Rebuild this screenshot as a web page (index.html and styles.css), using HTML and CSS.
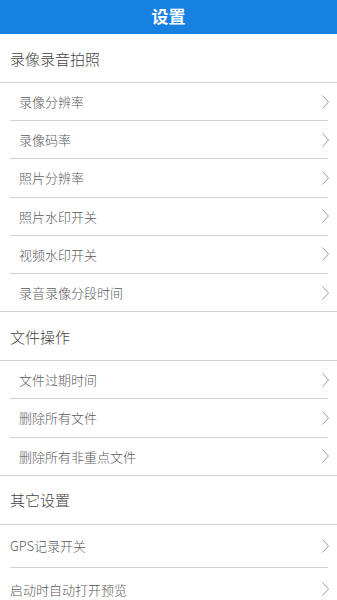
FILE: index.html
```html
<!DOCTYPE html>
<html lang="zh">
<head>
<meta charset="utf-8">
<title>设置</title>
<link rel="stylesheet" href="styles.css">
</head>
<body>
<header class="topbar"><h1 class="title">设置</h1></header>

<div class="section-title">录像录音拍照</div>
<div class="group">
  <div class="row"><span>录像分辨率</span><svg class="chev" viewBox="0 0 7 14"><polyline points="0.5,0.5 6.5,7 0.5,13.5"/></svg></div>
  <div class="row"><span>录像码率</span><svg class="chev" viewBox="0 0 7 14"><polyline points="0.5,0.5 6.5,7 0.5,13.5"/></svg></div>
  <div class="row"><span>照片分辨率</span><svg class="chev" viewBox="0 0 7 14"><polyline points="0.5,0.5 6.5,7 0.5,13.5"/></svg></div>
  <div class="row"><span>照片水印开关</span><svg class="chev" viewBox="0 0 7 14"><polyline points="0.5,0.5 6.5,7 0.5,13.5"/></svg></div>
  <div class="row"><span>视频水印开关</span><svg class="chev" viewBox="0 0 7 14"><polyline points="0.5,0.5 6.5,7 0.5,13.5"/></svg></div>
  <div class="row"><span>录音录像分段时间</span><svg class="chev" viewBox="0 0 7 14"><polyline points="0.5,0.5 6.5,7 0.5,13.5"/></svg></div>
</div>

<div class="section-title">文件操作</div>
<div class="group">
  <div class="row"><span>文件过期时间</span><svg class="chev" viewBox="0 0 7 14"><polyline points="0.5,0.5 6.5,7 0.5,13.5"/></svg></div>
  <div class="row"><span>删除所有文件</span><svg class="chev" viewBox="0 0 7 14"><polyline points="0.5,0.5 6.5,7 0.5,13.5"/></svg></div>
  <div class="row"><span>删除所有非重点文件</span><svg class="chev" viewBox="0 0 7 14"><polyline points="0.5,0.5 6.5,7 0.5,13.5"/></svg></div>
</div>

<div class="section-title">其它设置</div>
<div class="group group-flat">
  <div class="row"><span>GPS记录开关</span><svg class="chev" viewBox="0 0 7 14"><polyline points="0.5,0.5 6.5,7 0.5,13.5"/></svg></div>
  <div class="row"><span>启动时自动打开预览</span><svg class="chev" viewBox="0 0 7 14"><polyline points="0.5,0.5 6.5,7 0.5,13.5"/></svg></div>
</div>
</body>
</html>
```

FILE: styles.css
```css
* { box-sizing: border-box; }
html, body {
  margin: 0;
  padding: 0;
  background: #ffffff;
  font-family: "Noto Sans CJK SC", "Noto Sans", sans-serif;
}
.topbar {
  height: 34px;
  background: #1681e0;
  display: flex;
  align-items: center;
  justify-content: center;
}
.title {
  margin: 0;
  color: #ffffff;
  font-size: 17px;
  font-weight: bold;
  line-height: 1;
  position: relative;
  top: -2px;
}
.section-title {
  height: 49px;
  border-bottom: 1px solid #d2d2d2;
  padding-left: 10px;
  display: flex;
  align-items: center;
  font-size: 15px;
  font-weight: 300;
  color: #444444;
}
.group {
  border-bottom: 1px solid #d2d2d2;
}
.row {
  height: 38.2px;
  margin: 0 9px 0 10px;
  padding-left: 9px;
  display: flex;
  align-items: center;
  justify-content: space-between;
  border-bottom: 1px solid #d2d2d2;
  font-size: 13px;
  font-weight: 300;
  color: #5a5a5a;
}
.row:last-child {
  border-bottom: none;
  height: 37.2px;
}
.group-flat { border-bottom: none; }
.group-flat .row {
  padding-left: 0;
  height: 43px;
}
.group-flat .row:last-child { height: 43px; }
.chev {
  width: 7px;
  height: 14px;
  flex: none;
  margin-right: -1px;
  fill: none;
  stroke: #9a9a9a;
  stroke-width: 1;
}
```
